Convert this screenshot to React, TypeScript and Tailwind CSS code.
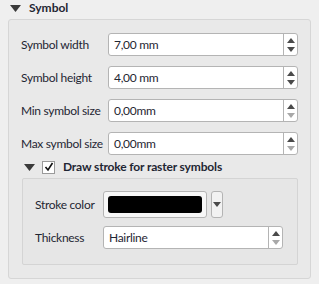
import React from 'react';

const Up = ({ light }: { light?: boolean }) => (
  <svg width="8" height="5" viewBox="0 0 8 5">
    <path d="M0 5 L4 0 L8 5 Z" fill={light ? '#a8a8a8' : '#4a4a4a'} />
  </svg>
);

const Down = ({ light }: { light?: boolean }) => (
  <svg width="8" height="5" viewBox="0 0 8 5">
    <path d="M0 0 L8 0 L4 5 Z" fill={light ? '#a8a8a8' : '#4a4a4a'} />
  </svg>
);

const Caret = () => (
  <svg width="11" height="7" viewBox="0 0 11 7">
    <path d="M0 0 L11 0 L5.5 7 Z" fill="#3a3a3a" />
  </svg>
);

const SpinBox = ({ value, width, downLight }: { value: string; width: string; downLight?: boolean }) => (
  <div className={`flex h-[23px] shrink-0 ${width} rounded-[3px] border border-[#b4b4b4] bg-white`}>
    <div className="flex flex-1 items-center pl-[5px]">{value}</div>
    <div className="flex w-[14px] flex-col items-center justify-center gap-[4px] border-l border-[#b4b4b4]">
      <Up />
      <Down light={downLight} />
    </div>
  </div>
);

const Row = ({ label, value, downLight }: { label: string; value: string; downLight?: boolean }) => (
  <div className="flex items-center">
    <div className="w-[87px] shrink-0 whitespace-nowrap">{label}</div>
    <SpinBox value={value} width="w-[190px]" downLight={downLight} />
  </div>
);

export default function App() {
  return (
    <div
      className="h-[284px] w-[319px] overflow-hidden bg-[#efefef] text-[12px] tracking-[-0.3px] text-[#1f2633]"
      style={{ fontFamily: 'Lato, "Noto Sans", sans-serif' }}
    >
      <div className="flex h-[19px] items-center pl-[10px] pb-[3px]">
        <Caret />
        <span className="ml-[8px] font-bold tracking-[0px]">Symbol</span>
      </div>
      <div className="ml-[8px] h-[260px] w-[303px] rounded-[3px] border border-[#d6d6d6] bg-[#e9e9e9] pl-[12px] pt-[13px]">
        <div className="flex flex-col gap-[10px]">
          <Row label="Symbol width" value="7,00 mm" />
          <Row label="Symbol height" value="4,00 mm" />
          <Row label="Min symbol size" value="0,00mm" downLight />
          <Row label="Max symbol size" value="0,00mm" downLight />
        </div>
        <div className="mt-[2px] flex h-[20px] items-center pl-[3px]">
          <Caret />
          <div className="ml-[7px] flex h-[13px] w-[13px] items-center justify-center border border-[#9a9a9a] bg-white">
            <svg width="10" height="10" viewBox="0 0 10 10">
              <path d="M1.5 5 L4 8 L8.5 1" stroke="#111" strokeWidth="1.6" fill="none" />
            </svg>
          </div>
          <span className="ml-[8px] whitespace-nowrap font-bold tracking-[-0.15px]">Draw stroke for raster symbols</span>
        </div>
        <div className="mt-[1px] ml-[1px] h-[87px] w-[276px] rounded-[2px] border border-[#d4d4d4] bg-[#e6e6e6] pl-[12px] pt-[12px]">
          <div className="flex items-center">
            <div className="w-[68px] shrink-0 whitespace-nowrap">Stroke color</div>
            <div className="flex h-[27px] w-[104px] shrink-0 items-center rounded-[3px] border border-[#b4b4b4] bg-[#f7f7f7] px-[4px]">
              <div className="h-[17px] w-full rounded-[3px] bg-black" />
            </div>
            <div className="ml-[4px] flex h-[27px] w-[12px] shrink-0 items-center justify-center rounded-[3px] border border-[#b4b4b4] bg-[#f2f2f2]">
              <Down />
            </div>
          </div>
          <div className="mt-[8px] flex items-center">
            <div className="w-[68px] shrink-0 whitespace-nowrap">Thickness</div>
            <SpinBox value="Hairline" width="w-[180px]" downLight />
          </div>
        </div>
      </div>
    </div>
  );
}
